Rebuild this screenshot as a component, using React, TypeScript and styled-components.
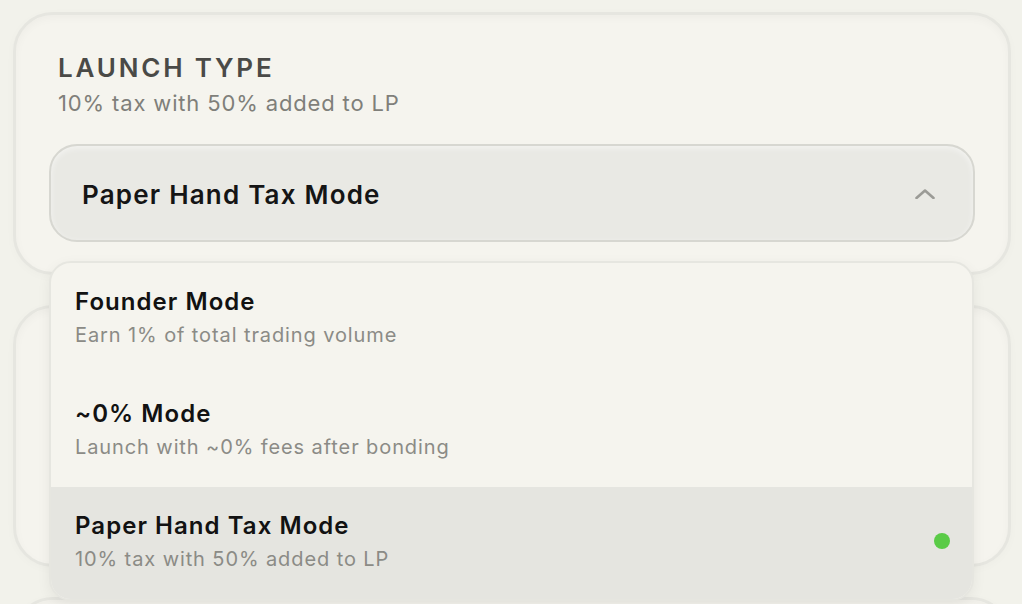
import React from 'react';
import styled, { createGlobalStyle } from 'styled-components';

const GlobalStyle = createGlobalStyle`
    html, body {
        margin: 0;
        padding: 0;
        background: #f2f2eb;
        font-family: Inter, "Noto Sans", "Liberation Sans", sans-serif;
        overflow: hidden;
    }
`;

interface CardProps {
    heightProp: number;
}

interface OptionProps {
    isSelected?: boolean;
}

const Page = styled.div`
    width: 1022px;
    height: 604px;
    box-sizing: border-box;
    padding: 12px 11px 0 13px;
    display: flex;
    flex-direction: column;
    gap: 30px;
    overflow: hidden;
`;

const Card = styled.div<CardProps>`
    position: relative;
    flex-shrink: 0;
    height: ${props => props.heightProp}px;
    box-sizing: border-box;
    border-radius: 40px;
    border: 3px solid #e6e6e0;
    background: #f5f4ee;
    box-shadow: inset 0 3px 8px rgba(0, 0, 0, 0.03), 0 2px 10px rgba(0, 0, 0, 0.025);
`;

const LaunchCard = styled(Card)`
    padding: 38px 33px 0 33px;
    z-index: 2;
`;

const Heading = styled.div`
    padding-left: 9px;
    display: flex;
    flex-direction: column;
    gap: 7px;
`;

const Title = styled.h2`
    margin: 0;
    font-size: 26px;
    line-height: 30px;
    font-weight: 600;
    letter-spacing: 2.8px;
    color: #4a4a47;
`;

const Subtitle = styled.p`
    margin: 0;
    font-size: 22px;
    line-height: 26px;
    letter-spacing: 0.85px;
    color: #7f7f7a;
`;

const SelectBox = styled.div`
    position: relative;
    margin-top: 28px;
`;

const Trigger = styled.button`
    width: 100%;
    height: 98px;
    box-sizing: border-box;
    display: flex;
    align-items: center;
    justify-content: space-between;
    padding: 2px 38px 0 31px;
    border-radius: 28px;
    border: 2px solid #d7d7d1;
    background: #e9e9e4;
    box-shadow: inset 0 2px 6px rgba(255, 255, 255, 0.5);
    font-family: inherit;
    font-size: 26px;
    font-weight: 600;
    letter-spacing: 1.2px;
    color: #151515;
    cursor: pointer;
`;

const Chevron = styled.svg`
    width: 20px;
    height: 10px;
`;

const Menu = styled.ul`
    position: absolute;
    top: 117px;
    left: 0;
    right: 1px;
    margin: 0;
    padding: 0;
    list-style: none;
    border-radius: 22px;
    border: 2px solid #e6e6e0;
    background: #f5f4ee;
    box-shadow: 0 4px 14px rgba(0, 0, 0, 0.06);
    overflow: hidden;
    z-index: 10;
`;

const Option = styled.li<OptionProps>`
    height: 112px;
    box-sizing: border-box;
    padding: 25px 22px 0 24px;
    display: flex;
    align-items: flex-start;
    justify-content: space-between;
    background: ${props => props.isSelected ? '#e5e5e0' : 'transparent'};
`;

const OptionText = styled.div`
    display: flex;
    flex-direction: column;
    gap: 7px;
`;

const OptionTitle = styled.span`
    font-size: 24px;
    line-height: 28px;
    font-weight: 600;
    letter-spacing: 1.05px;
    color: #121212;
`;

const OptionDesc = styled.span`
    font-size: 20px;
    line-height: 24px;
    letter-spacing: 0.9px;
    color: #8b8b86;
`;

const Dot = styled.span`
    width: 16px;
    height: 16px;
    border-radius: 50%;
    background: #5acb47;
    margin-top: 21px;
`;

const modes = [
    { name: 'Founder Mode', desc: 'Earn 1% of total trading volume' },
    { name: '~0% Mode', desc: 'Launch with ~0% fees after bonding' },
    { name: 'Paper Hand Tax Mode', desc: '10% tax with 50% added to LP' },
];

export default function App() {
    const selected = modes[2];

    return (
        <>
            <GlobalStyle />
            <Page>
                <LaunchCard heightProp={263}>
                    <Heading>
                        <Title>LAUNCH TYPE</Title>
                        <Subtitle>{selected.desc}</Subtitle>
                    </Heading>
                    <SelectBox>
                        <Trigger>
                            {selected.name}
                            <Chevron viewBox="0 0 20 10" fill="none">
                                <path d="M1.5 9L10 1.5L18.5 9" stroke="#9b9b96" strokeWidth="2.6" strokeLinecap="round" strokeLinejoin="round" />
                            </Chevron>
                        </Trigger>
                        <Menu>
                            {modes.map((mode) =>
                                <Option key={`mode_${mode.name}`} isSelected={mode.name === selected.name}>
                                    <OptionText>
                                        <OptionTitle>{mode.name}</OptionTitle>
                                        <OptionDesc>{mode.desc}</OptionDesc>
                                    </OptionText>
                                    {mode.name === selected.name ? <Dot /> : undefined}
                                </Option>
                            )}
                        </Menu>
                    </SelectBox>
                </LaunchCard>
                <Card heightProp={262} />
                <Card heightProp={200} />
            </Page>
        </>
    );
}
